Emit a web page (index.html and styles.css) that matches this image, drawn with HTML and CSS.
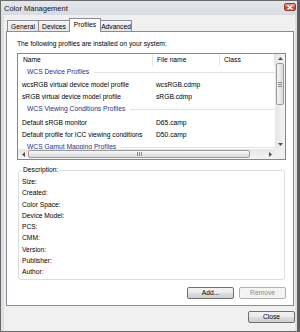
FILE: index.html
```html
<!DOCTYPE html>
<html lang="en">
<head>
    <meta charset="UTF-8">
    <title>Color Management</title>
    <link rel="stylesheet" href="styles.css">
</head>
<body>
    <div class="window">
        <div class="titlebar">
            <span class="title">Color Management</span>
            <span class="close-btn">
                <svg width="6" height="5" viewBox="0 0 6 5"><path d="M0.5 0.5 L5.5 4.5 M5.5 0.5 L0.5 4.5" stroke="#fff" stroke-width="1.3"/></svg>
            </span>
        </div>
        <div class="client">
            <div class="tabs">
                <div class="tab">General</div>
                <div class="tab">Devices</div>
                <div class="tab active">Profiles</div>
                <div class="tab">Advanced</div>
            </div>
            <div class="panel">
                <div class="intro">The following profiles are installed on your system:</div>
                <div class="listview">
                    <div class="lv-main">
                        <div class="lv-header">
                            <div class="col">Name</div>
                            <div class="col">File name</div>
                            <div class="col">Class</div>
                        </div>
                        <div class="lv-rows">
                            <div class="group"><span>WCS Device Profiles</span><span class="group-line"></span></div>
                            <div class="row"><div class="col">wcsRGB virtual device model profile</div><div class="col">wcsRGB.cdmp</div><div class="col"></div></div>
                            <div class="row"><div class="col">sRGB virtual device model profile</div><div class="col">sRGB.cdmp</div><div class="col"></div></div>
                            <div class="group"><span>WCS Viewing Conditions Profiles</span><span class="group-line"></span></div>
                            <div class="row"><div class="col">Default sRGB monitor</div><div class="col">D65.camp</div><div class="col"></div></div>
                            <div class="row"><div class="col">Default profile for ICC viewing conditions</div><div class="col">D50.camp</div><div class="col"></div></div>
                            <div class="group"><span>WCS Gamut Mapping Profiles</span><span class="group-line"></span></div>
                        </div>
                    </div>
                    <div class="vscroll">
                        <div class="sb-btn"><svg width="5" height="3" viewBox="0 0 5 3"><polygon points="0,3 2.5,0 5,3" fill="#505050"/></svg></div>
                        <div class="sb-thumb v">
                            <svg width="4" height="5" viewBox="0 0 4 5"><path d="M0 0.5 H4 M0 2.5 H4 M0 4.5 H4" stroke="#8a8a8a" stroke-width="1"/></svg>
                        </div>
                        <div class="sb-track"></div>
                        <div class="sb-btn"><svg width="5" height="3" viewBox="0 0 5 3"><polygon points="0,0 5,0 2.5,3" fill="#505050"/></svg></div>
                    </div>
                    <div class="hscroll">
                        <div class="sb-btn"><svg width="3" height="5" viewBox="0 0 3 5"><polygon points="3,0 3,5 0,2.5" fill="#505050"/></svg></div>
                        <div class="sb-thumb h">
                            <svg width="5" height="4" viewBox="0 0 5 4"><path d="M0.5 0 V4 M2.5 0 V4 M4.5 0 V4" stroke="#8a8a8a" stroke-width="1"/></svg>
                        </div>
                        <div class="sb-track"></div>
                        <div class="sb-btn"><svg width="3" height="5" viewBox="0 0 3 5"><polygon points="0,0 3,2.5 0,5" fill="#505050"/></svg></div>
                    </div>
                    <div class="sb-corner"></div>
                </div>
                <fieldset class="desc">
                    <legend>Description:</legend>
                    <div class="desc-line">Size:</div>
                    <div class="desc-line">Created:</div>
                    <div class="desc-line">Color Space:</div>
                    <div class="desc-line">Device Model:</div>
                    <div class="desc-line">PCS:</div>
                    <div class="desc-line">CMM:</div>
                    <div class="desc-line">Version:</div>
                    <div class="desc-line">Publisher:</div>
                    <div class="desc-line">Author:</div>
                </fieldset>
                <div class="panel-actions">
                    <button class="win-button">Add...</button>
                    <button class="win-button" disabled>Remove</button>
                </div>
            </div>
            <div class="dialog-actions">
                <button class="win-button">Close</button>
            </div>
        </div>
    </div>
</body>
</html>
```

FILE: styles.css
```css
:root {
    --frame: #dde0e5; --frame-border: #6a6a6a; --client: #f0f0f0;
    --tab-border: #898c95; --list-border: #828790; --group-text: #1e3287;
    --group-line: #dde4ee; --box-border: #d5dfe5; --text: #000;
}
body { margin: 0; font-family: "Liberation Sans", Arial, sans-serif; font-size: 6.7px; color: var(--text); background: var(--frame); }
.window { width: 300px; height: 332px; box-sizing: border-box; border: 1px solid var(--frame-border); border-right: 3px solid #5e5e5e; background: var(--frame); display: flex; flex-direction: column; }
.titlebar { height: 14px; flex: none; display: flex; align-items: center; padding-left: 3px; background: linear-gradient(#e4e7ec, #d8dce2); }
.title { font-size: 7.5px; color: #111; }
.close-btn { margin-left: auto; margin-right: 1px; margin-top: -2px; width: 12px; height: 8px; box-sizing: border-box; border: 1px solid #8d3b2c; border-radius: 2px; background: linear-gradient(#e8a28f, #d0684f 50%, #c1442b 51%, #cf6a4c); display: flex; align-items: center; justify-content: center; }
.client { flex: 1; margin: 0 2px 0 3px; background: var(--client); padding: 3px 0 0 2px; display: flex; flex-direction: column; }
.tabs { display: flex; align-items: flex-end; height: 13px; padding-left: 1px; position: relative; z-index: 1; }
.tab { width: 30px; height: 10px; line-height: 11px; border: 1px solid var(--tab-border); border-bottom: none; margin-right: -1px; text-align: center; background: linear-gradient(#f5f5f5, #e4e4e4); white-space: nowrap; }
.tab.active { height: 13px; line-height: 12px; margin-bottom: -1px; background: #fff; position: relative; z-index: 2; }
.panel { width: 288px; box-sizing: border-box; border: 1px solid var(--tab-border); background: #fff; padding: 6px 7px 6px 10px; }
.intro { line-height: 11px; }
.listview { margin-top: 4px; height: 107px; box-sizing: border-box; border: 1px solid var(--list-border); display: grid; grid-template-columns: 1fr 10px; grid-template-rows: 1fr 10px; }
.lv-main { overflow: hidden; }
.lv-header, .row { display: grid; grid-template-columns: 135px 67px 1fr; white-space: nowrap; }
.lv-header { height: 12px; line-height: 12px; }
.lv-header .col { border-right: 1px solid #e3e3e3; padding-left: 4px; overflow: hidden; }
.lv-header .col:first-child { padding-left: 5px; }
.row { height: 11.5px; line-height: 11.5px; }
.row .col { padding-left: 4px; overflow: hidden; }
.row .col:nth-child(2) { padding-left: 3px; }
.group { height: 15px; box-sizing: border-box; padding-top: 1px; line-height: 11.5px; display: flex; align-items: flex-start; padding-left: 9px; color: var(--group-text); white-space: nowrap; }
.group:first-child { height: 13px; padding-top: 0; }
.group-line { flex: 1; height: 1px; margin: 6px 0 0 5px; background: var(--group-line); }
.vscroll { display: flex; flex-direction: column; background: linear-gradient(to right, #e6e6e6, #f4f4f4); }
.hscroll { display: flex; background: linear-gradient(#e6e6e6, #f4f4f4); }
.sb-btn { flex: none; width: 10px; height: 9px; display: flex; align-items: center; justify-content: center; }
.hscroll .sb-btn { height: 10px; }
.sb-track { flex: 1; }
.sb-thumb { box-sizing: border-box; border: 1px solid #9a9a9a; border-radius: 2px; display: flex; align-items: center; justify-content: center; }
.sb-thumb.v { height: 42px; margin: 0 1px; background: linear-gradient(to right, #f6f6f6, #dadada); }
.sb-thumb.h { width: 222px; margin: 1px 0; background: linear-gradient(#f6f6f6, #dadada); }
.sb-corner { background: #f0f0f0; }
.desc { margin: 5px 0 0 1px; width: 267px; box-sizing: border-box; border: 1px solid var(--box-border); border-radius: 3px; padding: 1px 3px 2px 3px; min-inline-size: 0; }
.desc legend { padding: 0 1px; line-height: 10px; }
.desc-line { line-height: 11.25px; }
.panel-actions { display: flex; justify-content: flex-end; gap: 5px; margin-top: 7px; }
.dialog-actions { display: flex; justify-content: flex-end; margin-top: 5px; }
.win-button { width: 47px; height: 12px; box-sizing: border-box; padding: 0; border: 1px solid #707070; border-radius: 2px; font-family: "Liberation Sans", Arial, sans-serif; font-size: 6.7px; line-height: 10px; color: var(--text); background: linear-gradient(#f2f2f2, #ebebeb 50%, #dddddd 51%, #cfcfcf); }
.win-button:disabled { border-color: #adb2b5; background: #f4f4f4; color: #8a8a8a; }
```
